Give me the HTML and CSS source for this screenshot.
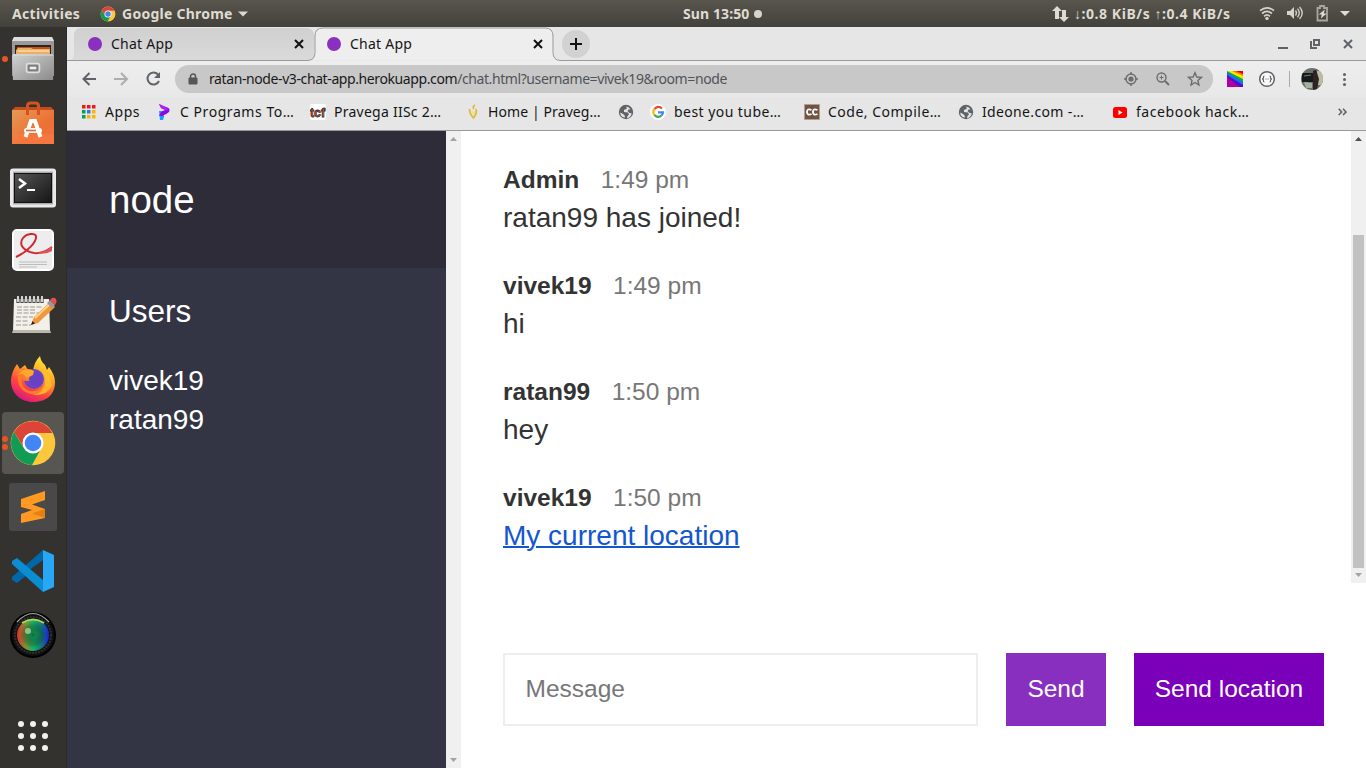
FILE: index.html
```html
<!DOCTYPE html>
<html lang="en">
<head>
<meta charset="utf-8">
<title>Chat App</title>
<link rel="stylesheet" href="styles.css">
</head>
<body>
<div class="desktop">
<header class="topbar">
  <span class="activities">Activities</span>
  <svg class="top-chrome" width="16" height="16" viewBox="0 0 48 48"><use href="#chrome"/></svg>
  <span class="app-name">Google Chrome</span>
  <svg width="10" height="6"><path d="M0 .5h10L5 5.5z" fill="#dad8d1"/></svg>
  <span class="clock">Sun 13:50</span><i class="clock-dot"></i>
  <svg class="net" width="17" height="18"><path d="M5 1L0 6h3v8h4V6h3zM12 17l5-5h-3V5h-4v7H7z" fill="#dfdbd2"/></svg>
  <span class="speed">↓:0.8 KiB/s ↑:0.4 KiB/s</span>
  <svg class="tray" width="88" height="17" fill="none" stroke="#d6d3ca">
    <path d="M1 5.7Q8 .2 15 5.7M3 8.5Q8 4.2 13 8.5M5 11.3Q8 8.6 11 11.3" stroke-width="1.7"/><circle cx="8" cy="13.4" r="1.7" fill="#d6d3ca" stroke="none"/>
    <path d="M28 6h3l4-4v12l-4-4h-3z" fill="#d6d3ca" stroke="none"/><path d="M36.500 5.500q2 2.500 0 5M38.500 3.700q3.500 4.300 0 8.600M40.500 2q5.500 6 0 12" stroke-width="1.300"/>
    <path d="M58.500 3h2.500V1h4v2h3v12.500h-9.500z" stroke="#aaa79f" stroke-width="1.800"/><path d="M65.800 4.500l-6 5h3l-1 4 6-5h-3z" fill="#dfdbd2" stroke="none"/>
    <path d="M81 6h10l-5 5z" fill="#dfdbd2" stroke="none"/>
  </svg>
</header>
<div class="workspace">
<nav class="dock">
  <div class="slot"><i class="run"></i>
    <svg width="48" height="48" viewBox="0 0 48 48"><defs><linearGradient id="gray" x2="1" y2="1"><stop stop-color="#d2d2d2"/><stop offset="1" stop-color="#8b8b8b"/></linearGradient></defs><path d="M5 2h38l2 4v35H3V6z" fill="#999"/><path d="M5 2h38l2 4H3z" fill="#ddd"/><path d="M6 10h36v12H6z" fill="#282522"/><path d="M8 12h33v8H8z" fill="#c4501b"/><path d="M7 15l2-2h13l2 1h17v7H7z" fill="#ecae60"/><path d="M9 16h31" stroke="#fff0d6"/><path d="M4 19h40l1 2-1 24H4L3 21z" fill="url(#gray)"/><path d="M4 20h40" stroke="#ddd"/><rect x="17.500" y="28.500" width="13" height="9" rx="2" fill="#a2a2a2" stroke="#dedede" stroke-width="1.500"/><rect x="20" y="31" width="8" height="4" fill="#eee" stroke="#555"/></svg></div>
  <div class="slot"><svg width="48" height="48" viewBox="0 0 48 48"><defs><linearGradient id="bag" x2="1" y2="1"><stop stop-color="#e59a58"/><stop offset=".6" stop-color="#ed7034"/><stop offset="1" stop-color="#f47140"/></linearGradient></defs><path d="M3 11l3-3h36l3 3z" fill="#c84c19"/><path d="M3 11h42v34H3z" fill="url(#bag)"/><path d="M3 35h42v10H3z" fill="#ff8048" opacity=".4"/><path d="M18.500 16V7q0-3 3-3h5q3 0 3 3v9" fill="none" stroke="#d65320" stroke-width="3"/><path d="M16.500 38l5.500-16h4l5.500 16" fill="none" stroke="#fff" stroke-width="4"/><rect x="15" y="29" width="18" height="5" rx="2.500" fill="#fff"/><path d="M17 31.500h10" stroke="#e96b30" stroke-width="1.700"/></svg></div>
  <div class="slot"><svg width="48" height="48" viewBox="0 0 48 48"><defs><linearGradient id="term" x2="1" y2="1"><stop stop-color="#555"/><stop offset="1" stop-color="#151515"/></linearGradient></defs><rect x="2.500" y="7" width="43" height="36" rx="1.500" fill="#aaa" stroke="#e9e9ed" stroke-width="3"/><rect x="5.500" y="10.500" width="37" height="29" fill="url(#term)" stroke="#111"/><path d="M10 16l6 4.500-6 4.500" fill="none" stroke="#fff" stroke-width="2.500"/><path d="M18 27h8" stroke="#fff" stroke-width="2"/></svg></div>
  <div class="slot"><svg width="48" height="48" viewBox="0 0 48 48"><rect x="4" y="3" width="40" height="40" rx="4" fill="#ededed" stroke="#fff" stroke-width="2"/><path d="M7 30C18 25 28 15 27 9c-1-3-9-3-13 2-5 7 1 13 11 15 8 1 14-3 18-6" fill="none" stroke="#cf2932" stroke-width="2"/><path d="M24 25q11 2 19-6v5q-8 5-19 1z" fill="#df5359"/><path d="M10 35h28M10 37.500h28M10 40h18" stroke="#bbb"/></svg></div>
  <div class="slot"><svg width="48" height="48" viewBox="0 0 48 48"><path d="M5 8h35l1 32H4z" fill="#f2f0e8"/><path d="M4 39h37l1 3H3z" fill="#b9b8ac"/><path d="M9 6v6M13 6v6M17 6v6M21 6v6M25 6v6M29 6v6M33 6v6" stroke="#444" stroke-width="3.200"/><path d="M9 5v6M13 5v6M17 5v6M21 5v6M25 5v6M29 5v6M33 5v6" stroke="#fff" stroke-width="1.500"/><path d="M8 16h25M8 19h19M8 22h22M7 26h17M7 30h12M7 34h15" stroke="#999" stroke-dasharray="5 1.500"/><path d="M22 34l3-8 16-15 5 5-17 16z" fill="#f0963b"/><path d="M26 27L42 12" stroke="#ffd28c" stroke-width="2"/><path d="M38 12l3-3 5 5-3 3z" fill="#999"/><path d="M41 9q2-3 5-2 3 3 0 7z" fill="#e95056"/><path d="M22 34l1.500-4 2.500 2.500z" fill="#222"/></svg></div>
  <div class="slot"><svg width="48" height="48" viewBox="0 0 48 48"><defs><linearGradient id="fox" x1=".8" x2=".3" y2="1"><stop stop-color="#fff045"/><stop offset=".35" stop-color="#ffae22"/><stop offset=".7" stop-color="#ff453f"/><stop offset="1" stop-color="#d81683"/></linearGradient></defs><path d="M8 9l3 5 5-4 3 5 5 1q1-9 7-15 1 6 5 9l2 5 2-3q6 8 6 15C46 41 36 47 24 47S1 38 2 24q1-8 6-15z" fill="url(#fox)"/><circle cx="25" cy="24" r="10" fill="#6b44c7"/><path d="M24 15q-8-1-12 1l-4 5 7-1q4 2 10 2-1 4-7 4-5 0-5-4-2 11 8 14 10 1 14-6l3 7q-8 5-16 2C12 37 8 29 9 20l5-7z" fill="#ff7a2d"/><circle cx="27" cy="24" r="7" fill="#6940c4"/><path d="M32 15q8 10 1 20-4 5-10 5 15 1 20-9-1-13-11-16z" fill="#ffc22d" opacity=".8"/><path d="M14 15q7-2 11 1l-1 4-6 3-4-4-6 1z" fill="#ffa62b"/></svg></div>
  <div class="slot current"><i class="run pair"></i><i class="run pair low"></i>
    <svg width="48" height="48" viewBox="0 0 48 48"><defs><g id="chrome"><circle cx="24" cy="24" r="22.300" fill="#fbc83d"/><path d="M5 13A22 22 0 0 1 43.500 14H24L15 29z" fill="#db4437"/><path d="M5 13A22 22 0 0 0 23 46l10-18-9 4-10-4z" fill="#119b55"/><circle cx="24" cy="24" r="10.500" fill="#fff"/><circle cx="24" cy="24" r="8.300" fill="#4285f4"/></g></defs><use href="#chrome"/></svg></div>
  <div class="slot"><svg width="48" height="48" viewBox="0 0 48 48"><rect width="48" height="48" rx="3" fill="#49494a"/><path d="M12 16l24-8v9l-13 4.500 13 4.500v9l-24 5v-9l11-4-11-3z" fill="#ff9921"/><path d="M36 26v9l-13-4.500z" fill="#e3800f"/></svg></div>
  <div class="slot"><svg width="48" height="48" viewBox="0 0 48 48"><path d="M34 3v12L8 36l-5-3v-3z" fill="#0068a9"/><path d="M34 3l11 5v32l-11 5z" fill="#27a7f5"/><path d="M34 13v21L19 24z" fill="#33322e"/><path d="M3 17v-3l5-3 26 22v12z" fill="#0b8dd2"/></svg></div>
  <div class="slot"><svg width="48" height="48" viewBox="0 0 48 48"><defs><linearGradient id="lens"><stop stop-color="#de3023"/><stop offset=".28" stop-color="#78963a"/><stop offset=".5" stop-color="#19b366"/><stop offset=".75" stop-color="#147c76"/><stop offset="1" stop-color="#1a1ee5"/></linearGradient><radialGradient id="deep"><stop stop-color="#073"/><stop offset=".25" stop-color="#138653"/><stop offset=".5" stop-color="#0b5c2d" stop-opacity=".5"/><stop offset="1" stop-opacity="0"/></radialGradient></defs><circle cx="24" cy="24" r="22" fill="#111" stroke="#000" stroke-width="2"/><path d="M8 11Q24-6 40 11" fill="none" stroke="#aaa" stroke-width="1.200"/><circle cx="24" cy="24" r="18" fill="none" stroke="#303030" stroke-width="2" stroke-dasharray="2 1"/><circle cx="24" cy="24" r="16" fill="url(#lens)"/><circle cx="24" cy="24" r="13" fill="url(#deep)"/><path d="M13 12Q24 5 35 12" stroke="#a9d75c" fill="none" stroke-width="2"/><circle cx="19" cy="20" r="3" fill="#bbdda0" opacity=".7"/></svg></div>
  <div class="show-apps"><i></i><i></i><i></i><i></i><i></i><i></i><i></i><i></i><i></i></div>
</nav>
<main class="window">
  <div class="tabs">
    <svg class="tab-shapes" width="1299" height="34"><defs><linearGradient id="idle" x2="0" y2="1"><stop stop-color="#d0d0d0"/><stop offset="1" stop-color="#dadada"/></linearGradient></defs><path d="M0 33.500q7 0 7-7V9q0-8 7-8h225q8 0 8 8v24.500z" fill="url(#idle)"/><path d="M0 33.500h240q8 0 8-8V9q0-8 8-8h222q8 0 8 8v16.500q0 8 8 8h805" fill="#eee" stroke="#999"/></svg>
    <div class="tab"><i></i><span class="tab-title">Chat App</span><svg width="10" height="10"><path d="M1 1l8 8M9 1L1 9" stroke="#111" stroke-width="2"/></svg></div>
    <div class="tab"><i></i><span class="tab-title">Chat App</span><svg width="10" height="10"><path d="M1 1l8 8M9 1L1 9" stroke="#111" stroke-width="2"/></svg></div>
    <div class="new-tab"><svg width="12" height="12"><path d="M6 0v12M0 6h12" stroke="#111" stroke-width="2"/></svg></div>
    <svg class="win-controls" width="76" height="14" fill="none" stroke="#5f6368" stroke-width="2"><path d="M0 11h10"/><path d="M36 3h5v5h-5zM33 4v7h6" stroke-width="2"/><path d="M66 3l8 8M74 3l-8 8"/></svg>
  </div>
  <div class="toolbar">
    <svg width="82" height="18" fill="none" stroke="#5f6368" stroke-width="2"><path d="M14 9H1.500M7.500 3l-6 6 6 6"/><path d="M32 9h13M39 3l6 6-6 6" stroke="#adadad"/><path d="M76 4.500A6 6 0 1 0 77 11"/><path d="M78 2v6h-6z" fill="#5f6368" stroke="none"/></svg>
    <div class="address">
      <svg width="10" height="12"><path d="M1 5h8v6H1z" fill="#54575b" stroke="#54575b"/><path d="M2.500 5V3.500a2.500 2.500 0 0 1 5 0V5" fill="none" stroke="#54575b" stroke-width="1.500"/></svg>
      <span class="url"><b>ratan-node-v3-chat-app.herokuapp.com</b>/chat.html?username=vivek19&amp;room=node</span>
      <svg class="url-tools" width="80" height="16" fill="none" stroke="#6b6d70" stroke-width="1.400"><circle cx="8" cy="8" r="5"/><circle cx="8" cy="8" r="2.600" fill="#6b6d70" stroke="none"/><path d="M8 1v3M8 12v3M1 8h3M12 8h3"/><circle cx="38.500" cy="6.500" r="4.500"/><path d="M42 10l4 4" stroke-width="2"/><path d="M36.500 6.500h4M38.500 4.500v4" stroke-width="1"/><path d="M72 1.700l1.800 4.300 4.600.4-3.500 3 1 4.600-3.900-2.500L68 14l1-4.600-3.500-3 4.600-.4z"/></svg>
    </div>
    <svg class="rainbow" width="16" height="16"><path fill="#b000a5" d="M0 0h16v16H0z"/><path d="M0 6l13 10h3V0H0z" fill="#5010c5"/><path d="M0 4l16 10V0H0z" fill="#1a6dff"/><path d="M0 1l16 10V0H0z" fill="#00b82d"/><path d="M0 0l16 8V0z" fill="#ffe500"/><path d="M5 0l11 5V0z" fill="#ff7600"/><path d="M9 0l7 3V0z" fill="#f00000"/></svg>
    <svg class="json" width="18" height="18" fill="none" stroke="#5f6368" stroke-width="1.500"><circle cx="9" cy="9" r="7.300" fill="#fafafa"/><path d="M6.500 6q-1.500 0-1 2l-1 1 1 1q-.5 2 1 2M11.500 6q1.500 0 1 2l1 1-1 1q.5 2-1 2M7.500 9h1M9.500 9h1" stroke-width="1.100"/></svg>
    <i class="divider"></i>
    <svg class="avatar" width="22" height="22" viewBox="0 0 22 22"><defs><clipPath id="round"><circle cx="11" cy="11" r="11"/></clipPath></defs><g clip-path="url(#round)"><path fill="#697266" d="M0 0h22v22H0z"/><path fill="#bdbba4" d="M16 3h6v14h-5z"/><path d="M1 5h11l2 9H1z" fill="#161a1b"/><path d="M12 3q4-3 4 2l2 6-2 11h-4z" fill="#302325"/><path d="M3 14l8 1v5H5z" fill="#a6b0a2"/><path d="M3 8l7-1" stroke="#6b8180"/></g></svg>
    <i class="menu"></i>
  </div>
  <div class="bookmarks">
    <a class="bm apps"><svg width="14" height="14"><path d="M0 0h3.500v3.500H0zM5 0h3.500v3.500H5zM10 0h3.500v3.500H10z" fill="#f01818"/><path d="M0 5h3.500v3.500H0zM0 10h3.500v3.500H0z" fill="#0a9d58"/><path d="M5 5h3.500v3.500H5z" fill="#2878f4"/><path d="M10 5h3.500v3.500H10zM5 10h3.500v3.500H5zM10 10h3.500v3.500H10z" fill="#fdb305"/></svg><span>Apps</span></a>
    <a class="bm cprog"><svg width="14" height="16"><path d="M1 7h5v6l-1 3H2z" fill="#159fff"/><path d="M1 0l7 3q5 1 3 5-2 2-7 4H1l2-4 4-2-4-2z" fill="#8d08e8"/><path d="M1 0l6 3 4 3H8L3 4z" fill="#b91cff"/></svg><span>C Programs To…</span></a>
    <a class="bm tcf"><svg width="16" height="16"><rect width="16" height="16" rx="2" fill="#fff"/><text x="0" y="12.500" font-family="Liberation Sans" font-size="13" font-weight="700" textLength="15" lengthAdjust="spacingAndGlyphs" fill="#e65025" stroke="#333" stroke-width=".8">tcf</text></svg><span>Pravega IISc 2…</span></a>
    <a class="bm home"><svg width="14" height="16"><path d="M3.500 5q0 5 4 9 4-5 2.500-9M9 1q-3 2-1 4" fill="none" stroke="#e0ba35" stroke-width="1.700"/><path d="M6 7l2 4 1-4" fill="none" stroke="#f2dc7b"/></svg><span>Home | Praveg…</span></a>
    <a class="bm globe-only"><svg width="16" height="16"><g id="globe"><circle cx="8" cy="8" r="7.200" fill="#5f6368"/><path d="M8 2.500l1 2-3 1.500v2l4 .5 1 2-1.500 1.500-.5 2.300q4-.8 4.700-5l-2.200-.3-2-2 1-1.500h2q-1-2.500-4.500-3M2.300 8.500q0 4.500 4.500 5.200v-2L5 10z" fill="#e4e4e4"/></g></svg></a>
    <a class="bm best"><svg width="16" height="16"><circle cx="8" cy="8" r="8" fill="#fff"/><g fill="none" stroke-width="2.200"><path d="M12 4.500Q8 1 4.500 5" stroke="#ea4335"/><path d="M4.500 5Q2 8 4.500 11" stroke="#fbbc05"/><path d="M4.500 11q3.500 3.500 7 .5" stroke="#34a853"/><path d="M11.500 11.500Q13 10 13 8.300H8" stroke="#4285f4"/></g></svg><span>best you tube…</span></a>
    <a class="bm code"><svg width="16" height="16"><path fill="#705344" stroke="#b49e89" d="M.5.500h15v15H.5z"/><path d="M7.500 6Q3 4 3 8t4.500 2M13.500 6Q9 4 9 8t4.500 2" fill="none" stroke="#fff" stroke-width="1.900"/></svg><span>Code, Compile…</span></a>
    <a class="bm ideone"><svg width="16" height="16"><use href="#globe"/></svg><span>Ideone.com -…</span></a>
    <a class="bm yt"><svg width="16" height="16"><rect x="1" y="3" width="14" height="11" rx="2.500" fill="#f00"/><path d="M6.500 6l4 2.500-4 2.500z" fill="#fff"/></svg><span>facebook hack…</span></a>
    <svg class="more" width="9" height="8"><path d="M.7.700L3.700 4l-3 3M5 .7L8 4 5 7" fill="none" stroke="#5f6368" stroke-width="1.600"/></svg>
  </div>
  <div class="chat">
    <aside class="sidebar"><h2 class="room">node</h2><h3 class="users-title">Users</h3><ul class="users"><li>vivek19</li><li>ratan99</li></ul></aside>
    <div class="scroll side"><svg width="7" height="4"><path d="M0 4l3.500-4L7 4z" fill="#a3a3a3"/></svg><svg width="7" height="4"><path d="M0 0h7L3.500 4z" fill="#a3a3a3"/></svg></div>
    <section class="chat-main">
      <div class="feed">
        <div class="messages">
          <div class="message"><p class="meta"><b>Admin</b><span>1:49 pm</span></p><p>ratan99 has joined!</p></div>
          <div class="message"><p class="meta"><b>vivek19</b><span>1:49 pm</span></p><p>hi</p></div>
          <div class="message"><p class="meta"><b>ratan99</b><span>1:50 pm</span></p><p>hey</p></div>
          <div class="message"><p class="meta"><b>vivek19</b><span>1:50 pm</span></p><p><a class="location" href="#">My current location</a></p></div>
        </div>
        <div class="scroll"><svg width="7" height="4"><path d="M0 4l3.500-4L7 4z" fill="#505050"/></svg><i class="thumb"></i><svg width="7" height="4"><path d="M0 0h7L3.500 4z" fill="#a3a3a3"/></svg></div>
      </div>
      <form class="compose"><input class="field" placeholder="Message"><button class="btn send" type="button">Send</button><button class="btn locate" type="button">Send location</button></form>
    </section>
  </div>
</main>
</div>
</div>
</body>
</html>
```
FILE: styles.css
```css
* { box-sizing: border-box; }
body, p, h2, h3, ul { margin: 0; padding: 0; }
body { overflow: hidden; }
svg { display: block; flex: none; }
.desktop { width: 1366px; height: 768px; display: flex; flex-direction: column; font-family: "Noto Sans", sans-serif; }
.topbar { height: 27px; display: flex; align-items: center; background: linear-gradient(#58554d, #42413b); color: #dfdbd2; font-size: 14px; font-weight: 700; white-space: nowrap; padding-left: 12px; }
.activities { width: 88px; letter-spacing: .32px; }
.app-name { margin-left: 6px; width: 110px; letter-spacing: .25px; }
.topbar > svg:nth-of-type(2) { margin-left: 6px; }
.clock { margin-left: 435px; width: 68px; letter-spacing: .1px; }
.clock-dot { width: 8px; height: 8px; border-radius: 50%; background: #d6d3cc; margin-left: 3px; }
.net { margin-left: 290px; width: 17px; }
.speed { margin-left: 5px; width: 157px; letter-spacing: .55px; }
.tray { margin-left: 28px; overflow: visible; }
.workspace { flex: 1; display: flex; min-height: 0; }
.dock { width: 67px; flex: none; background: #33322e; border-right: 1px solid #2c2b2b; display: flex; flex-direction: column; align-items: center; gap: 2px; padding-top: 1px; }
.slot { width: 62px; height: 62px; display: flex; align-items: center; justify-content: center; position: relative; border-radius: 4px; }
.current { background: #575650; }
.run { position: absolute; left: 0; top: 28px; width: 6px; height: 6px; border-radius: 50%; background: #e95420; }
.pair { top: 24px; }
.low { top: 32px; }
.show-apps { display: grid; grid-template-columns: repeat(3, 6px); gap: 6px; margin-top: 53px; }
.show-apps i { width: 6px; height: 6px; border-radius: 50%; background: #f2f1ee; }
.window { width: 1299px; display: flex; flex-direction: column; background: #e8e8e8; font-size: 14px; color: #151515; white-space: nowrap; }
.tabs { height: 34px; display: flex; align-items: center; position: relative; background: #e6e6e6; padding-left: 8px; }
.tab-shapes { position: absolute; left: 0; top: 0; }
.tab { width: 239px; height: 34px; position: relative; display: flex; align-items: center; padding-left: 13px; }
.tab i { width: 14px; height: 14px; border-radius: 50%; background: #8a2fc0; }
.tab-title { margin-left: 9px; width: 183px; letter-spacing: .25px; padding-bottom: 2px; }
.new-tab { position: relative; margin-left: 9px; width: 28px; height: 28px; border-radius: 50%; background: #d2d2d2; display: flex; align-items: center; justify-content: center; }
.win-controls { position: relative; margin-left: auto; margin-right: 12px; }
.toolbar { height: 36px; display: flex; align-items: center; background: linear-gradient(#eee, #e8e8e8); padding-left: 15px; }
.address { width: 1038px; height: 28px; margin-left: 11px; border-radius: 14px; background: #c8c8c8; display: flex; align-items: center; padding-left: 13px; }
.url { margin-left: 11px; color: #505459; letter-spacing: -.41px; padding-bottom: 1px; }
.url b { font-weight: 400; color: #18191a; letter-spacing: -.4px; }
.url-tools { margin-left: auto; margin-right: 10px; }
.rainbow { margin-left: 14px; }
.json { margin-left: 15px; }
.divider { width: 1px; height: 16px; background: #aaa; margin-left: 13px; }
.avatar { margin-left: 11px; }
.menu { width: 3px; height: 3px; border-radius: 50%; background: #5f6368; box-shadow: 0 -5px #5f6368, 0 5px #5f6368; margin-left: 20px; }
.bookmarks { height: 34px; border-bottom: 1px solid #999; background: #e6e6e6; display: flex; align-items: center; padding: 0 0 4px 15px; }
.bm { display: flex; align-items: center; gap: 8px; }
.bm span { letter-spacing: .55px; }
.apps { width: 76px; gap: 9px; }
.cprog { width: 152px; }
.tcf { width: 156px; }
.tcf span { letter-spacing: .25px; }
.home { width: 152px; }
.home span { letter-spacing: .1px; }
.globe-only { width: 32px; }
.best { width: 154px; }
.best span { letter-spacing: .45px; }
.code { width: 154px; }
.code span { letter-spacing: .5px; }
.ideone { width: 154px; }
.ideone span { letter-spacing: .35px; }
.more { margin-left: auto; margin-right: 19px; }
.chat { height: 637px; display: flex; font-family: "Liberation Sans", sans-serif; font-size: 28px; color: #333; background: #fff; }
.sidebar { width: 379px; background: #333544; color: #fff; }
.room { height: 137px; background: #2d2c38; padding: 46px 42px 0; font-size: 38.5px; font-weight: 400; line-height: 46px; }
.users-title { padding: 24px 42px 0; font-size: 31.5px; font-weight: 400; line-height: 38px; }
.users { padding: 31px 42px 0; list-style: none; line-height: 39px; }
.scroll { width: 15px; background: #f0f0f0; display: flex; flex-direction: column; align-items: center; padding: 6px 0; }
.scroll svg:last-child { margin-top: auto; }
.chat-main { flex: 1; display: flex; flex-direction: column; }
.feed { height: 452px; display: flex; justify-content: space-between; }
.messages { padding: 30px 42px 0; }
.message { height: 106px; line-height: 38px; }
.meta { display: flex; font-size: 24.5px; }
.meta span { color: #777; margin-left: 21.5px; }
.location { color: #1256d0; text-decoration-thickness: 2px; }
.thumb { width: 11px; height: 333px; background: #c1c1c1; margin-top: 94px; }
.compose { display: flex; padding: 70px 42px 0; }
.field { width: 475px; height: 73px; border: 2px solid #eee; padding: 0 20.5px 2px; font: 24.5px "Liberation Sans", sans-serif; }
.field::placeholder { color: #777; }
.btn { height: 73px; margin-left: 28px; border: 0; color: #fff; padding: 0 0 2px; font: 24.5px "Liberation Sans", sans-serif; }
.send { width: 100px; background: #882fbf; }
.locate { width: 190px; background: #7b00ba; }
```
